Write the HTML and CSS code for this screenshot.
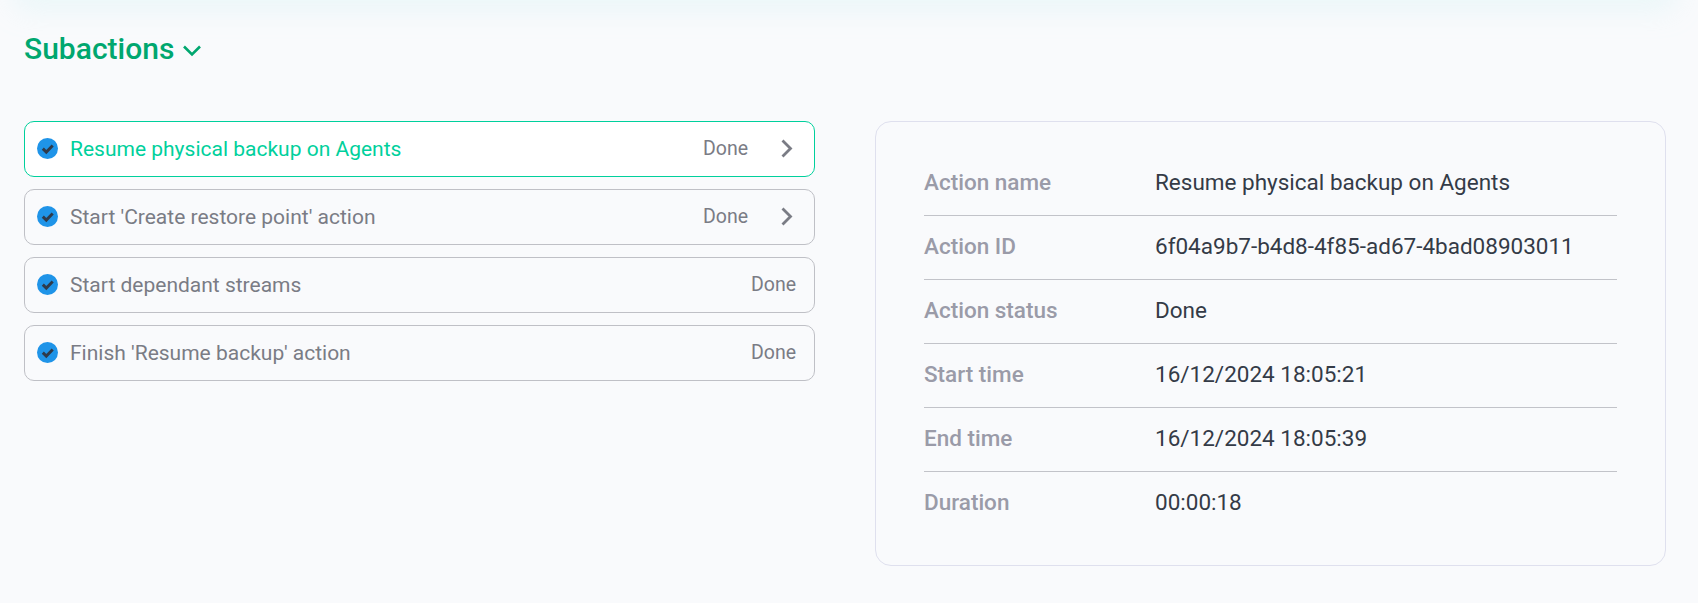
FILE: index.html
```html
<!DOCTYPE html>
<html lang="en">
<head>
<meta charset="utf-8">
<title>Subactions</title>
<link rel="stylesheet" href="styles.css">
</head>
<body>
<div class="top-shadow"></div>
<main class="page">
  <button class="heading">
    <span>Subactions</span>
    <svg class="heading-icon" width="20" height="13" viewBox="0 0 20 13"><path d="M2 2.500l8 8 8-8" fill="none" stroke="currentColor" stroke-width="2.6"/></svg>
  </button>
  <div class="columns">
    <ul class="list">
      <li class="row active">
        <svg class="check" width="21" height="21" viewBox="0 0 21 21"><circle cx="10.500" cy="10.500" r="10.500" fill="#1f94e8"/><path d="M5.800 10.600l3.500 3.500 6.400-6.600" fill="none" stroke="#2f3a4a" stroke-width="2.9"/></svg>
        <span class="name">Resume physical backup on Agents</span>
        <span class="status">Done</span>
        <svg class="chev" width="12" height="19" viewBox="0 0 12 19"><path d="M1.500 1.500l8 8-8 8" fill="none" stroke="currentColor" stroke-width="2.8"/></svg>
      </li>
      <li class="row">
        <svg class="check" width="21" height="21" viewBox="0 0 21 21"><circle cx="10.500" cy="10.500" r="10.500" fill="#1f94e8"/><path d="M5.800 10.600l3.500 3.500 6.400-6.600" fill="none" stroke="#2f3a4a" stroke-width="2.9"/></svg>
        <span class="name">Start 'Create restore point' action</span>
        <span class="status">Done</span>
        <svg class="chev" width="12" height="19" viewBox="0 0 12 19"><path d="M1.500 1.500l8 8-8 8" fill="none" stroke="currentColor" stroke-width="2.8"/></svg>
      </li>
      <li class="row">
        <svg class="check" width="21" height="21" viewBox="0 0 21 21"><circle cx="10.500" cy="10.500" r="10.500" fill="#1f94e8"/><path d="M5.800 10.600l3.500 3.500 6.400-6.600" fill="none" stroke="#2f3a4a" stroke-width="2.9"/></svg>
        <span class="name">Start dependant streams</span>
        <span class="status">Done</span>
      </li>
      <li class="row">
        <svg class="check" width="21" height="21" viewBox="0 0 21 21"><circle cx="10.500" cy="10.500" r="10.500" fill="#1f94e8"/><path d="M5.800 10.600l3.500 3.500 6.400-6.600" fill="none" stroke="#2f3a4a" stroke-width="2.9"/></svg>
        <span class="name">Finish 'Resume backup' action</span>
        <span class="status">Done</span>
      </li>
    </ul>
    <section class="panel">
      <div class="field"><span class="label">Action name</span><span class="value">Resume physical backup on Agents</span></div>
      <div class="field"><span class="label">Action ID</span><span class="value">6f04a9b7-b4d8-4f85-ad67-4bad08903011</span></div>
      <div class="field"><span class="label">Action status</span><span class="value">Done</span></div>
      <div class="field"><span class="label">Start time</span><span class="value">16/12/2024 18:05:21</span></div>
      <div class="field"><span class="label">End time</span><span class="value">16/12/2024 18:05:39</span></div>
      <div class="field"><span class="label">Duration</span><span class="value">00:00:18</span></div>
    </section>
  </div>
</main>
</body>
</html>
```
FILE: styles.css
```css
* { box-sizing: border-box; }
html, body { margin: 0; height: 100%; }
body {
  background: #f9fafc;
  font-family: Roboto, "Liberation Sans", sans-serif;
  overflow: hidden;
  position: relative;
}
.top-shadow {
  position: absolute;
  left: 24px;
  right: 32px;
  top: -40px;
  height: 40px;
  box-shadow: 0 0 30px 8px rgba(190, 240, 240, 0.27);
}
.page { padding: 28px 32px 0 24px; }
.heading {
  display: flex;
  align-items: center;
  gap: 8px;
  height: 42px;
  padding: 0;
  border: 0;
  background: none;
  color: #00a76f;
  font: 500 30px/42px Roboto, sans-serif;
}
.heading-icon { margin-top: 2px; }
.columns {
  display: flex;
  gap: 60px;
  margin-top: 51px;
  align-items: flex-start;
}
.list {
  flex: 0 0 791px;
  margin: 0;
  padding: 0;
  list-style: none;
  display: flex;
  flex-direction: column;
  gap: 12px;
}
.row {
  display: flex;
  align-items: center;
  height: 56px;
  padding: 0 18px 1px 12px;
  border: 1px solid #bfc0c6;
  border-radius: 10px;
  color: #7a7c85;
  font-size: 21px;
}
.row.active { background: #fff; border-color: #00d09c; }
.row.active .name { color: #00d09c; }
.check { flex: none; margin-right: 12px; }
.name { flex: 1; }
.status { font-size: 19.5px; }
.chev { flex: none; margin: 0 3px 0 33px; }
.panel {
  flex: 0 0 791px;
  height: 445px;
  padding: 30px 48px;
  border: 1px solid #dfe0ee;
  border-radius: 16px;
}
.field {
  display: flex;
  align-items: center;
  height: 64px;
  padding-bottom: 4px;
  font-size: 22.5px;
  border-bottom: 1px solid #c2c3c9;
}
.field:last-child { border-bottom: 0; }
.label {
  flex: 0 0 231px;
  font-weight: 500;
  color: #9a9ba8;
}
.value { color: #343b47; }
```
